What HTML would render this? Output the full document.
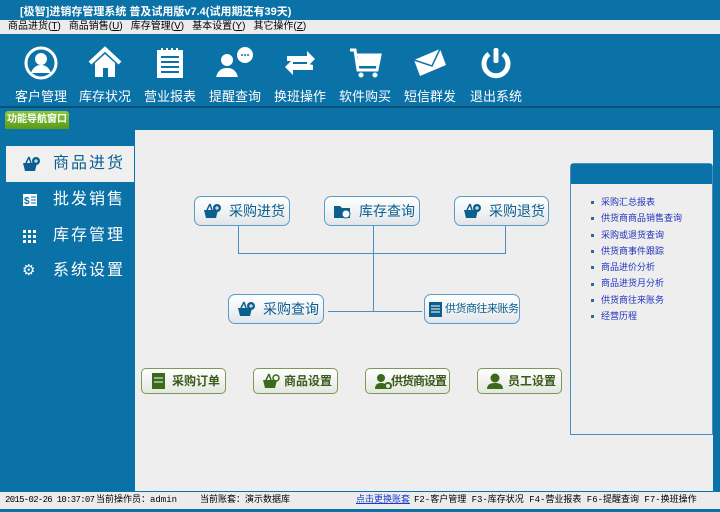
<!DOCTYPE html><html><head><meta charset="utf-8"><style>
*{margin:0;padding:0;box-sizing:border-box}
body{width:720px;height:512px;overflow:hidden;background:#0b72a8;font-family:"Liberation Sans","Noto Sans CJK SC",sans-serif;position:relative}
.a{position:absolute;white-space:nowrap}
.title{left:20px;top:3px;color:#fff;font-size:11px;font-weight:bold}
.menu{left:0;top:20px;width:720px;height:14px;background:#ececec;font-size:10px;color:#000;padding-left:8px;line-height:14px}
.menu span{margin-right:8px}
.tb{top:46px;width:60px;text-align:center;color:#fff;font-size:13px}
.tb svg{display:block;margin:0 auto 6px;height:34px}
.sep{left:0;top:106px;width:720px;height:2px;background:#0a4f78}
.tab{left:5px;top:111px;width:64px;height:18px;background:linear-gradient(#8cc63e,#5a9a1a);color:#fff;font-size:10px;font-weight:bold;text-align:center;line-height:18px;border-radius:3px 3px 0 0}
.content{left:135px;top:130px;width:578px;height:361px;background:#eeeeee}
.nav{left:6px;color:#fff;font-size:16px;letter-spacing:2px;height:36px;line-height:36px;width:128px;padding-left:47px}
.nav.sel{background:#f0f0f0;color:#0b5f8f}
.nav i{position:absolute;left:16px;top:10px;width:16px;height:16px;font-style:normal;font-size:15px;line-height:16px}
.btn{height:30px;border:1px solid #5a9cc8;border-radius:7px;background:linear-gradient(#fff,#e2e6e9);color:#0b5f8f;font-size:14px;line-height:28px;padding-left:34px}
.gbtn{top:368px;height:26px;width:85px;border:1px solid #7a9a5a;border-radius:5px;background:linear-gradient(#fff,#e4e6e0);color:#3a5a1a;font-size:12px;font-weight:bold;line-height:24px;padding-left:30px}
.ic{position:absolute;left:8px;top:6px;width:18px;height:16px}
.ln{background:#4a8fbf}
.rp{left:570px;top:163px;width:143px;height:272px;border:1px solid #4a8fbf;background:#eeeeee;border-radius:4px 4px 0 0}
.rp .h{height:20px;background:#0b72a8}
.rp ul{list-style:none;margin-top:10px;padding-left:20px}
.rp li{font-size:9px;color:#2233bb;height:16.3px;line-height:16px}
.rp li:before{content:"";display:inline-block;width:3px;height:3px;background:#2a6aa0;margin-right:7px;vertical-align:middle}
.status{left:0;top:492px;width:720px;height:17px;background:#ececec;font-size:9px;line-height:17px;color:#000;font-family:"Liberation Mono","Noto Sans CJK SC",monospace}
</style></head><body>
<div class="a title">[极智]进销存管理系统 普及试用版v7.4(试用期还有39天)</div>
<div class="a menu"><span>商品进货(<u>T</u>)</span><span>商品销售(<u>U</u>)</span><span>库存管理(<u>V</u>)</span><span>基本设置(<u>Y</u>)</span><span>其它操作(<u>Z</u>)</span></div>

<div class="a tb" style="left:11px"><svg viewBox="0 0 34 34"><circle cx="17" cy="17" r="15" fill="none" stroke="#fff" stroke-width="3"/><circle cx="17" cy="13" r="6" fill="#fff"/><path d="M7 27c2-6 6-8 10-8s8 2 10 8" fill="#fff"/></svg>客户管理</div>
<div class="a tb" style="left:75px"><svg viewBox="0 0 34 34"><path d="M2 17L17 3l15 14" fill="none" stroke="#fff" stroke-width="4"/><path d="M7 17v14h8v-9h5v9h7V17L17 8z" fill="#fff"/></svg>库存状况</div>
<div class="a tb" style="left:140px"><svg viewBox="0 0 34 34"><rect x="4" y="4" width="26" height="28" fill="#fff"/><path d="M8 11h18M8 16h18M8 21h18M8 26h18" stroke="#0b72a8" stroke-width="2"/><path d="M9 2v4M14 2v4M19 2v4M24 2v4" stroke="#fff" stroke-width="2"/></svg>营业报表</div>
<div class="a tb" style="left:205px"><svg viewBox="0 0 40 34"><circle cx="12" cy="14" r="6" fill="#fff"/><path d="M1 31c2-7 6-9 11-9s9 2 11 9z" fill="#fff"/><circle cx="30" cy="9" r="8" fill="#fff"/><circle cx="27" cy="9" r="1" fill="#0b72a8"/><circle cx="30" cy="9" r="1" fill="#0b72a8"/><circle cx="33" cy="9" r="1" fill="#0b72a8"/></svg>提醒查询</div>
<div class="a tb" style="left:270px"><svg viewBox="0 0 34 34"><path d="M4 15v-5h20V5l8 8-8 8v-5H8v-1z" fill="#fff"/><path d="M30 19v5H10v5l-8-8 8-8v5h16z" fill="#fff"/></svg>换班操作</div>
<div class="a tb" style="left:335px"><svg viewBox="0 0 34 34"><path d="M2 4h5l3 20h19l3-15H9" fill="none" stroke="#fff" stroke-width="3"/><rect x="10" y="9" width="20" height="11" fill="#fff"/><circle cx="13" cy="29" r="2.5" fill="#fff"/><circle cx="27" cy="29" r="2.5" fill="#fff"/></svg>软件购买</div>
<div class="a tb" style="left:400px"><svg viewBox="0 0 36 34"><path d="M2 14L28 3l6 16-26 11z" fill="#fff"/><path d="M2 14l18 6 8-17" fill="none" stroke="#0b72a8" stroke-width="1.5"/></svg>短信群发</div>
<div class="a tb" style="left:466px"><svg viewBox="0 0 34 34"><path d="M10 8a12 12 0 1 0 14 0" fill="none" stroke="#fff" stroke-width="5"/><rect x="14.5" y="2" width="5" height="15" rx="2" fill="#fff"/></svg>退出系统</div>

<div class="a sep"></div>
<div class="a tab">功能导航窗口</div>
<div class="a content"></div>

<svg width="0" height="0" style="position:absolute"><defs><g id="bk"><path d="M1 7h14l-2 8H3z" fill="#0b5f8f"/><path d="M4 7l3-6M9 7l-2-6" stroke="#0b5f8f" stroke-width="1.5"/><circle cx="14" cy="5" r="4" fill="#0b5f8f"/><path d="M12 5h4M14 3v4" stroke="#fff"/></g></defs></svg>

<div class="a nav sel" style="top:146px"><i><svg width="18" height="16"><use href="#bk"/></svg></i>商品进货</div>
<div class="a nav" style="top:182px"><i><svg width="16" height="16"><rect x="1" y="2" width="14" height="12" fill="#fff"/><text x="2" y="12" font-size="10" fill="#0b72a8" font-weight="bold">$</text><path d="M9 5h5M9 8h5M9 11h5" stroke="#0b72a8"/></svg></i>批发销售</div>
<div class="a nav" style="top:218px"><i><svg width="16" height="16" fill="#fff"><rect x="1" y="2" width="3" height="3"/><rect x="6" y="2" width="3" height="3"/><rect x="11" y="2" width="3" height="3"/><rect x="1" y="7" width="3" height="3"/><rect x="6" y="7" width="3" height="3"/><rect x="11" y="7" width="3" height="3"/><rect x="1" y="12" width="3" height="3"/><rect x="6" y="12" width="3" height="3"/><rect x="11" y="12" width="3" height="3"/></svg></i>库存管理</div>
<div class="a nav" style="top:253px"><i>⚙</i>系统设置</div>

<div class="a ln" style="left:238px;top:226px;width:1px;height:28px"></div>
<div class="a ln" style="left:505px;top:226px;width:1px;height:28px"></div>
<div class="a ln" style="left:238px;top:253px;width:268px;height:1px"></div>
<div class="a ln" style="left:373px;top:226px;width:1px;height:86px"></div>
<div class="a ln" style="left:328px;top:311px;width:94px;height:1px"></div>

<div class="a btn" style="left:194px;top:196px;width:96px"><svg class="ic"><use href="#bk"/></svg>采购进货</div>
<div class="a btn" style="left:324px;top:196px;width:96px"><svg class="ic"><path d="M1 3h6l2 2h8v10H1z" fill="#0b5f8f"/><circle cx="13" cy="11" r="4" fill="#fff" stroke="#0b5f8f"/></svg>库存查询</div>
<div class="a btn" style="left:454px;top:196px;width:95px"><svg class="ic"><use href="#bk"/></svg>采购退货</div>
<div class="a btn" style="left:228px;top:294px;width:96px"><svg class="ic"><use href="#bk"/></svg>采购查询</div>
<div class="a btn" style="left:424px;top:294px;width:96px;font-size:11px;padding-left:20px;letter-spacing:-0.5px"><svg class="ic" style="left:3px"><rect x="1" y="1" width="13" height="15" fill="#0b5f8f"/><path d="M3 5h9M3 8h9M3 11h9" stroke="#fff"/></svg>供货商往来账务</div>

<div class="a gbtn" style="left:141px"><svg class="ic" style="top:4px"><rect x="2" y="0" width="13" height="16" fill="#3a6a1a"/><path d="M4 5h9M4 9h9" stroke="#fff"/></svg>采购订单</div>
<div class="a gbtn" style="left:253px"><svg class="ic" style="top:4px"><path d="M1 7h14l-2 8H3z" fill="#3a6a1a"/><path d="M4 7l3-6M9 7l-2-6" stroke="#3a6a1a" stroke-width="1.5"/><circle cx="14" cy="5" r="3" fill="none" stroke="#3a6a1a" stroke-width="1.5"/></svg>商品设置</div>
<div class="a gbtn" style="left:365px;padding-left:25px;letter-spacing:-1px"><svg class="ic" style="top:4px"><circle cx="7" cy="5" r="4" fill="#3a6a1a"/><path d="M1 16c0-5 3-6 6-6s4 1 4 2v4z" fill="#3a6a1a"/><circle cx="14" cy="13" r="3" fill="none" stroke="#3a6a1a" stroke-width="2"/></svg>供货商设置</div>
<div class="a gbtn" style="left:477px"><svg class="ic" style="top:4px"><circle cx="9" cy="5" r="4.5" fill="#3a6a1a"/><path d="M1 16c0-5 4-6 8-6s8 1 8 6z" fill="#3a6a1a"/></svg>员工设置</div>

<div class="a rp"><div class="h"></div><ul><li>采购汇总报表</li><li>供货商商品销售查询</li><li>采购或退货查询</li><li>供货商事件跟踪</li><li>商品进价分析</li><li>商品进货月分析</li><li>供货商往来账务</li><li>经营历程</li></ul></div>

<div class="a status"><span style="position:absolute;left:5px;letter-spacing:-0.7px">2015-02-26 10:37:07</span><span style="position:absolute;left:96px">当前操作员：admin</span><span style="position:absolute;left:200px">当前账套：演示数据库</span><span style="position:absolute;left:356px;color:#1a3acc;text-decoration:underline">点击更换账套</span><span style="position:absolute;left:414px">F2-客户管理 F3-库存状况 F4-营业报表 F6-提醒查询 F7-换班操作</span></div>
</body></html>
